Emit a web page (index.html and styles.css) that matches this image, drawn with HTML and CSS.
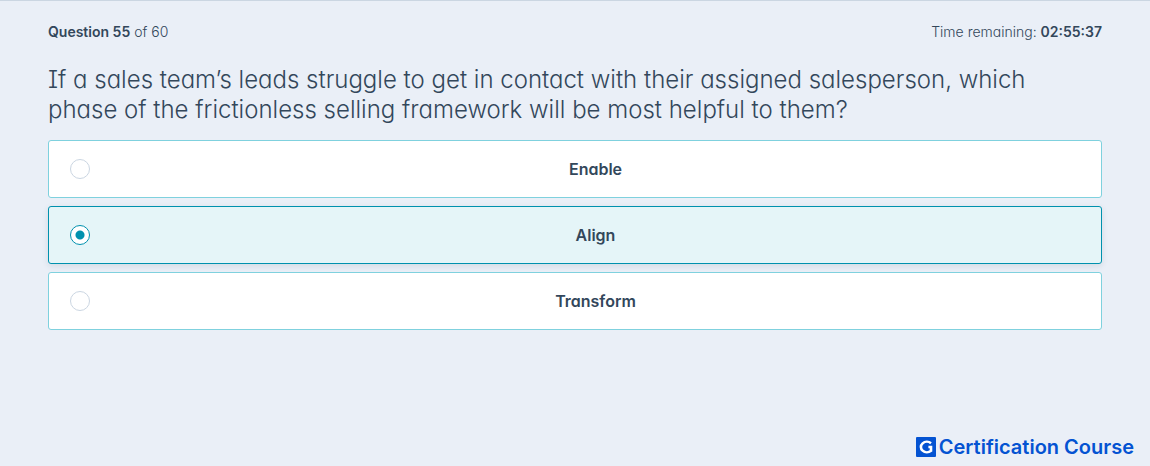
FILE: index.html
```html
<!DOCTYPE html>
<html lang="en">
<head>
    <meta charset="UTF-8">
    <meta name="viewport" content="width=device-width, initial-scale=1.0">
    <title>Certification Exam</title>
    <link rel="stylesheet" href="styles.css">
</head>
<body>
    <main class="exam">
        <div class="exam-status">
            <div><strong>Question 55</strong> of 60</div>
            <div>Time remaining: <strong>02:55:37</strong></div>
        </div>

        <form>
            <fieldset class="question">
                <legend class="question-text">If a sales team’s leads struggle to get in contact with their assigned salesperson, which phase of the frictionless selling framework will be most helpful to them?</legend>
                <div class="answers">
                    <label class="answer">
                        <input type="radio" name="answer" value="enable">
                        <span>Enable</span>
                    </label>
                    <label class="answer">
                        <input type="radio" name="answer" value="align" checked>
                        <span>Align</span>
                    </label>
                    <label class="answer">
                        <input type="radio" name="answer" value="transform">
                        <span>Transform</span>
                    </label>
                </div>
            </fieldset>
        </form>
    </main>

    <footer class="brand">
        <svg class="brand-logo" viewBox="0 0 20 20" aria-hidden="true">
            <rect width="20" height="20" rx="1" fill="#0453d2"/>
            <path d="M15 6.2A6 5.2 0 1 0 15 13.8V10H12.4" fill="none" stroke="#fff" stroke-width="2.6"/>
        </svg>
        <span>Certification Course</span>
    </footer>
</body>
</html>
```
FILE: styles.css
```css
* {
    box-sizing: border-box;
}

body {
    display: flex;
    flex-direction: column;
    min-height: 100vh;
    margin: 0;
    border-top: 1px solid #cbd6e2;
    background-color: #eaeff7;
    color: #33475b;
    font-family: Inter, "Open Sans", sans-serif;
    font-optical-sizing: none;
}

.exam {
    flex: 1;
    padding: 19px 48px;
    font-feature-settings: "cv11", "cv08";
}

.exam-status {
    display: flex;
    justify-content: space-between;
    margin-bottom: 21px;
    font-size: 14px;
    font-weight: 300;
    line-height: 24px;
}

.exam-status strong {
    font-weight: 600;
}

.question {
    min-width: 0;
    margin: 0;
    padding: 0;
    border: none;
}

.question-text {
    margin-bottom: 15px;
    padding: 0 32px 0 0;
    font-size: 24px;
    font-weight: 300;
    line-height: 30px;
}

.answers {
    display: flex;
    flex-direction: column;
    gap: 8px;
}

.answer {
    display: flex;
    align-items: center;
    padding: 16px 0 16px 21px;
    border: 1px solid #7fd1de;
    border-radius: 3px;
    background-color: white;
    font-size: 16px;
    font-weight: 600;
    line-height: 24px;
    cursor: pointer;
}

.answer span {
    flex: 1;
    text-align: center;
}

.answer input {
    appearance: none;
    width: 20px;
    height: 20px;
    margin: 0;
    border: 1px solid #cbd6e2;
    border-radius: 50%;
    background-color: white;
}

.answer input:checked {
    border-color: #0091ae;
    background-image: radial-gradient(circle, #0091ae 4px, transparent 5px);
}

.answer:has(input:checked) {
    border-color: #0091ae;
    background-color: #e5f5f8;
    box-shadow: 0 2px 6px rgba(45, 62, 80, 0.12);
}

.brand {
    display: flex;
    align-items: center;
    justify-content: flex-end;
    gap: 3px;
    padding: 0 16px 7px;
    color: #0453d2;
    font-size: 20px;
    font-weight: 600;
    line-height: 24px;
}

.brand-logo {
    width: 20px;
    height: 20px;
}
```
